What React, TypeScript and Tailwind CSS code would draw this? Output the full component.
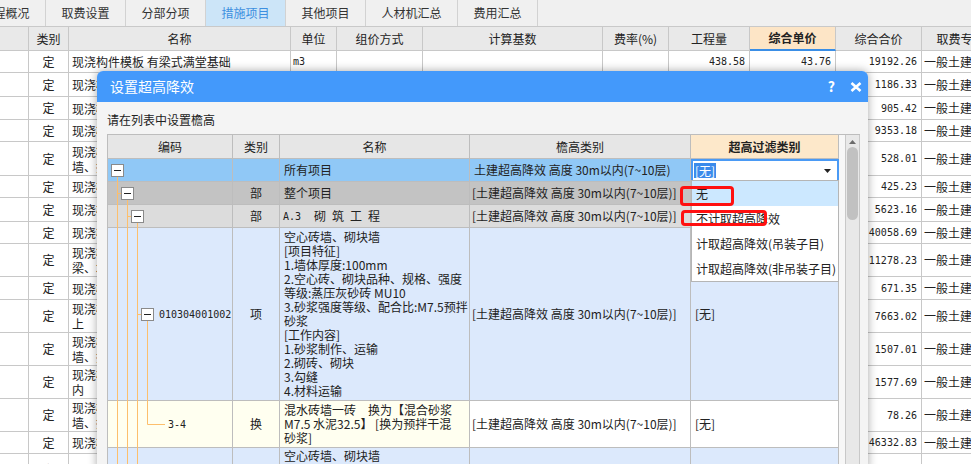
import React from 'react';

const tabs = [
  { label: '工程概况', w: 'w-[80px] -ml-[34px]' },
  { label: '取费设置', w: 'w-[80px]' },
  { label: '分部分项', w: 'w-[80px]' },
  { label: '措施项目', w: 'w-[80px]', active: true },
  { label: '其他项目', w: 'w-[80px]' },
  { label: '人材机汇总', w: 'w-[92px]' },
  { label: '费用汇总', w: 'w-[80px]' },
];

const mainCols = [
  'w-[29px]',
  'w-[40px]',
  'w-[222px]',
  'w-[46px]',
  'w-[86px]',
  'w-[180px]',
  'w-[66px]',
  'w-[81px]',
  'w-[86px]',
  'w-[86px]',
  'w-[78px]',
];

const mainHeaders = ['', '类别', '名称', '单位', '组价方式', '计算基数', '费率(%)', '工程量', '综合单价', '综合合价', '取费专业'];

type MainRow = { h: number; name: string[]; unit?: string; qty?: string; price?: string; total: string };

const mainRows: MainRow[] = [
  { h: 22, name: ['现浇构件模板 有梁式满堂基础'], unit: 'm3', qty: '438.58', price: '43.76', total: '19192.26' },
  { h: 24, name: ['现浇构件模板 矩形柱'], total: '1186.33' },
  { h: 23, name: ['现浇构件模板 构造柱'], total: '905.42' },
  { h: 22, name: ['现浇构件模板 圈梁'], total: '9353.18' },
  { h: 34, name: ['现浇构件模板 直形墙 电梯井壁', '墙、挡土墙'], total: '528.01' },
  { h: 22, name: ['现浇构件模板 过梁'], total: '425.23' },
  { h: 24, name: ['现浇构件模板 平板'], total: '5623.16' },
  { h: 22, name: ['现浇构件模板 有梁板'], total: '40058.69' },
  { h: 33, name: ['现浇构件模板 单梁 连续梁', '梁、地圈梁'], total: '11278.23' },
  { h: 23, name: ['现浇构件模板 楼梯'], total: '671.35' },
  { h: 33, name: ['现浇构件模板 挑檐天沟 雨篷', '上'], total: '7663.02' },
  { h: 33, name: ['现浇构件模板 弧形墙 电梯井壁', '墙、挡土墙'], total: '1507.01' },
  { h: 33, name: ['现浇构件模板 栏板 翻檐', '内'], total: '1577.69' },
  { h: 33, name: ['现浇构件模板 直形墙 电梯井壁', '墙、挡土墙'], total: '78.26' },
  { h: 22, name: ['现浇构件模板 压顶'], total: '46332.83' },
  { h: 33, name: ['现浇构件模板 小型构件', ''], total: '' },
];

const rowHeights: Record<number, string> = {
  22: 'h-[22px]',
  23: 'h-[23px]',
  24: 'h-[24px]',
  33: 'h-[33px]',
  34: 'h-[34px]',
};

const num = "font-['DejaVu_Sans_Mono',monospace] text-[10px]";
const cell = 'shrink-0 border-r border-b border-[#c8c8c8] flex items-center overflow-hidden whitespace-nowrap';
const dcell = 'shrink-0 border-r border-b border-[#bdbdbd] flex overflow-hidden whitespace-nowrap';
const eave = '[土建超高降效 高度 30m以内(7~10层)]';

function MainTable() {
  return (
    <div>
      <div className="flex h-[24px] bg-[#e9e9e9]">
        {mainHeaders.map((h, i) => (
          <div
            key={i}
            className={`${mainCols[i]} ${cell} justify-center ${
              i === 8 ? 'bg-[#fde5c6] font-bold border-b-2 border-b-[#3a8ee6]' : ''
            }`}
          >
            {h}
          </div>
        ))}
      </div>
      {mainRows.map((r, idx) => (
        <div key={idx} className={`flex ${rowHeights[r.h]}`}>
          <div className={`${mainCols[0]} ${cell}`} />
          <div className={`${mainCols[1]} ${cell} justify-center`}>定</div>
          <div className={`${mainCols[2]} ${cell} pl-[3px]`}>
            <div className="flex flex-col leading-[15px]">
              {r.name.map((l, j) => (
                <span key={j}>{l}</span>
              ))}
            </div>
          </div>
          <div className={`${mainCols[3]} ${cell} pl-[2px] ${num}`}>{r.unit}</div>
          <div className={`${mainCols[4]} ${cell}`} />
          <div className={`${mainCols[5]} ${cell}`} />
          <div className={`${mainCols[6]} ${cell}`} />
          <div className={`${mainCols[7]} ${cell} justify-end pr-[4px] ${num}`}>{r.qty}</div>
          <div className={`${mainCols[8]} ${cell} justify-end pr-[4px] ${num}`}>{r.price}</div>
          <div className={`${mainCols[9]} ${cell} justify-end pr-[4px] ${num}`}>{r.total}</div>
          <div className={`${mainCols[10]} ${cell} pl-[2px]`}>{r.total ? '一般土建' : ''}</div>
        </div>
      ))}
    </div>
  );
}

function TreeLines() {
  const c = '#fdbf6c';
  const box = (x: number, y: number) => (
    <g>
      <rect x={x + 0.5} y={y + 0.5} width={12} height={12} fill="#fff" stroke="#8a8a8a" />
      <line x1={x + 3} y1={y + 6.5} x2={x + 10} y2={y + 6.5} stroke="#222" />
    </g>
  );
  return (
    <svg className="pointer-events-none absolute left-0 top-[24px]" width={125} height={320}>
      <line x1={9.5} y1={17} x2={9.5} y2={320} stroke={c} />
      <line x1={9.5} y1={34.5} x2={13} y2={34.5} stroke={c} />
      <line x1={19.5} y1={40} x2={19.5} y2={320} stroke={c} />
      <line x1={19.5} y1={57.5} x2={23} y2={57.5} stroke={c} />
      <line x1={29.5} y1={63} x2={29.5} y2={320} stroke={c} />
      <line x1={29.5} y1={155.5} x2={33} y2={155.5} stroke={c} />
      <line x1={39.5} y1={161} x2={39.5} y2={265.5} stroke={c} />
      <line x1={39.5} y1={265.5} x2={57} y2={265.5} stroke={c} />
      {box(3, 5)}
      {box(13, 28)}
      {box(23, 51)}
      {box(33, 149)}
    </svg>
  );
}

const dw = ['w-[125px]', 'w-[47px]', 'w-[190px]', 'w-[221px]', 'w-[148px]'];

function DialogTable() {
  return (
    <div className="flex border-t border-l border-[#bdbdbd]">
      <div className="relative w-[731px] shrink-0">
        <div className="flex h-[24px] bg-[#e6e6e6]">
          {['编码', '类别', '名称', '檐高类别', '超高过滤类别'].map((h, i) => (
            <div
              key={h}
              className={`${dw[i]} ${dcell} items-center justify-center ${i === 4 ? 'bg-[#fde8ca] font-bold' : ''}`}
            >
              {h}
            </div>
          ))}
        </div>

        <div className="flex h-[23px] bg-[#90c8f6]">
          <div className={`${dw[0]} ${dcell}`} />
          <div className={`${dw[1]} ${dcell}`} />
          <div className={`${dw[2]} ${dcell} items-center pl-[4px]`}>所有项目</div>
          <div className={`${dw[3]} ${dcell} items-center pl-[4px]`}>土建超高降效 高度 30m以内(7~10层)</div>
          <div className={`${dw[4]} shrink-0 flex items-center justify-between border-2 border-[#4a9af5] bg-white pl-[1px] pr-[6px]`}>
            <span className="bg-[#3b8beb] px-[1px] leading-[15px] text-white">[无]</span>
            <svg width="7" height="4" viewBox="0 0 7 4">
              <path d="M0 0h7L3.5 4z" fill="#222" />
            </svg>
          </div>
        </div>

        <div className="flex h-[23px] bg-[#c3c3c3]">
          <div className={`${dw[0]} ${dcell}`} />
          <div className={`${dw[1]} ${dcell} items-center justify-center`}>部</div>
          <div className={`${dw[2]} ${dcell} items-center pl-[4px]`}>整个项目</div>
          <div className={`${dw[3]} ${dcell} items-center pl-[2px]`}>{eave}</div>
          <div className={`${dw[4]} ${dcell}`} />
        </div>

        <div className="flex h-[23px] bg-[#dcdcdc]">
          <div className={`${dw[0]} ${dcell}`} />
          <div className={`${dw[1]} ${dcell} items-center justify-center`}>部</div>
          <div className={`${dw[2]} ${dcell} items-center pl-[3px]`}>
            <span className={num}>A.3</span>
            <span className="ml-[13px]">砌</span>
            <span className="ml-[6px]">筑</span>
            <span className="ml-[6px]">工</span>
            <span className="ml-[6px]">程</span>
          </div>
          <div className={`${dw[3]} ${dcell} items-center pl-[2px]`}>{eave}</div>
          <div className={`${dw[4]} ${dcell}`} />
        </div>

        <div className="flex h-[173px] bg-[#dce9fc]">
          <div className={`${dw[0]} ${dcell} items-center pl-[51px] ${num}`}>010304001002</div>
          <div className={`${dw[1]} ${dcell} items-center justify-center`}>项</div>
          <div className={`${dw[2]} ${dcell} flex-col justify-center pl-[4px] leading-[14px]`}>
            <span>空心砖墙、砌块墙</span>
            <span>[项目特征]</span>
            <span>1.墙体厚度:100mm</span>
            <span>2.空心砖、砌块品种、规格、强度</span>
            <span>等级:蒸压灰砂砖 MU10</span>
            <span>3.砂浆强度等级、配合比:M7.5预拌</span>
            <span>砂浆</span>
            <span>[工作内容]</span>
            <span>1.砂浆制作、运输</span>
            <span>2.砌砖、砌块</span>
            <span>3.勾缝</span>
            <span>4.材料运输</span>
          </div>
          <div className={`${dw[3]} ${dcell} items-center pl-[2px]`}>{eave}</div>
          <div className={`${dw[4]} ${dcell} items-center pl-[4px]`}>[无]</div>
        </div>

        <div className="flex h-[47px]">
          <div className={`${dw[0]} ${dcell} items-center bg-[#fffff0] pl-[60px] ${num}`}>3-4</div>
          <div className={`${dw[1]} ${dcell} items-center justify-center bg-[#fffff0]`}>换</div>
          <div className={`${dw[2]} ${dcell} flex-col justify-center bg-[#fffff0] pl-[4px] leading-[14px]`}>
            <span>混水砖墙一砖　换为【混合砂浆</span>
            <span>M7.5 水泥32.5】 [换为预拌干混</span>
            <span>砂浆]</span>
          </div>
          <div className={`${dw[3]} ${dcell} items-center bg-white pl-[2px]`}>{eave}</div>
          <div className={`${dw[4]} ${dcell} items-center bg-white pl-[4px]`}>[无]</div>
        </div>

        <div className="flex h-[60px] bg-[#dce9fc]">
          <div className={`${dw[0]} ${dcell}`} />
          <div className={`${dw[1]} ${dcell}`} />
          <div className={`${dw[2]} ${dcell} flex-col pl-[4px] pt-[1px] leading-[14px]`}>
            <span>空心砖墙、砌块墙</span>
            <span>[项目特征]</span>
          </div>
          <div className={`${dw[3]} ${dcell}`} />
          <div className={`${dw[4]} ${dcell}`} />
        </div>

        <TreeLines />
      </div>

      <div className="w-[6px] shrink-0 bg-[#f7f7f7]" />
      <div className="relative w-[15px] shrink-0 border-x border-[#c8c8c8] bg-[#e8e8e8]">
        <svg className="absolute left-[3px] top-[5px]" width="7" height="4" viewBox="0 0 7 4">
          <path d="M3.5 0L7 4H0z" fill="#6b6b6b" />
        </svg>
        <div className="absolute left-[1px] top-[12px] h-[73px] w-[11px] rounded-full bg-[#c1c1c1]" />
      </div>
    </div>
  );
}

function Dialog() {
  return (
    <div className="absolute left-[97px] top-[71px] h-[400px] w-[771px] rounded-t-[6px] bg-[#f4f4f4] shadow-[0_0_10px_rgba(0,0,0,0.35)]">
      <div className="flex h-[31px] items-center justify-between rounded-t-[6px] bg-[#4399fb] pl-[13px] pr-[6px] text-white">
        <span className="text-[14px]">设置超高降效</span>
        <div className="flex items-center gap-[15px]">
          <span className="text-[14px] font-bold">?</span>
          <svg width="12" height="10" viewBox="0 0 12 10">
            <path d="M1.5 1l9 8M10.5 1l-9 8" stroke="#fff" strokeWidth="2.6" />
          </svg>
        </div>
      </div>
      <div className="pl-[10px] pt-[10px]">
        <div className="h-[16px] leading-[16px]">请在列表中设置檐高</div>
        <div className="mt-[6px] w-[753px]">
          <DialogTable />
        </div>
      </div>

      <div className="absolute left-[594px] top-[109px] w-[148px] border border-[#b5b5b5] bg-white">
        {['无', '不计取超高降效', '计取超高降效(吊装子目)', '计取超高降效(非吊装子目)'].map((t, i) => (
          <div key={t} className={`h-[25px] pl-[4px] leading-[25px] ${i === 0 ? 'bg-[#cce8ff]' : ''}`}>
            {t}
          </div>
        ))}
      </div>

      <div className="absolute left-[583px] top-[115px] h-[20px] w-[54px] rounded-[4px] border-[3px] border-[#ff1010]" />
      <div className="absolute left-[584px] top-[139px] h-[16px] w-[86px] rounded-[4px] border-[3px] border-[#ff1010]" />
    </div>
  );
}

export default function App() {
  return (
    <div className="relative h-[464px] w-[971px] overflow-hidden bg-white font-['Noto_Sans_CJK_SC',sans-serif] text-[12px] text-[#222]">
      <div className="flex h-[27px] overflow-hidden border-b border-[#c9c9c9] bg-[#f0f0f0]">
        {tabs.map((t) => (
          <div
            key={t.label}
            className={`${t.w} flex shrink-0 items-center justify-center border-r border-[#d2d2d2] ${
              t.active ? 'bg-[#cce5f8] text-[#3c8fe0]' : 'text-[#333]'
            }`}
          >
            {t.label}
          </div>
        ))}
      </div>
      <MainTable />
      <Dialog />
    </div>
  );
}
